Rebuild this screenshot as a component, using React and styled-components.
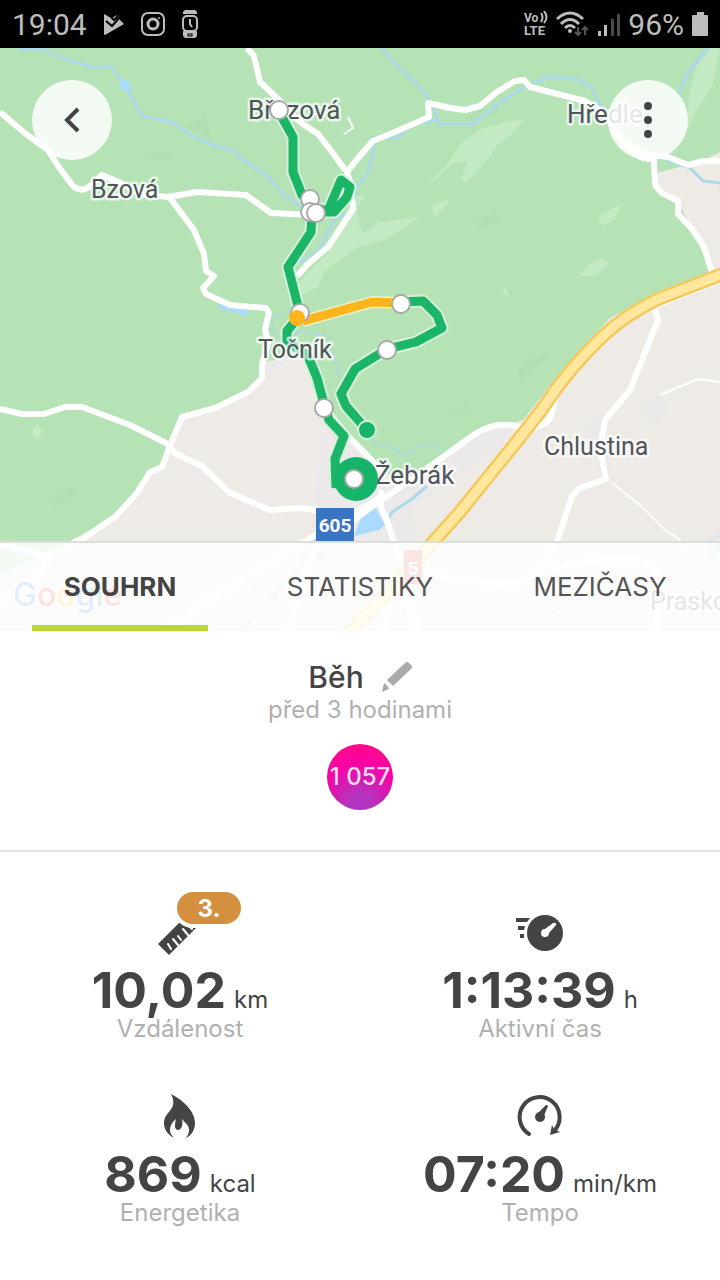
import React, { useState } from "react";
import styled, { createGlobalStyle, css } from "styled-components";

const GlobalStyle = createGlobalStyle`
  * {
    box-sizing: border-box;
  }

  body {
    margin: 0;
    background: #fff;
    color: #444;
    font-family: Inter, "Open Sans", sans-serif;
  }
`;

const StatusBar = styled.header`
  display: flex;
  align-items: center;
  justify-content: space-between;
  height: 48px;
  padding: 0 12px;
  background: #000;
  color: #bdbdbd;
  font-family: Roboto, sans-serif;
  font-size: 30px;
`;

const StatusGroup = styled.div`
  display: flex;
  align-items: center;
  gap: ${props => props.$gap}px;

  svg {
    display: block;
  }
`;

const Hero = styled.section`
  position: relative;
`;

const MapCanvas = styled.svg`
  display: block;
  width: 100%;
  height: auto;
  background: #b5e3b5;
`;

const PlaceName = styled.text`
  font-family: Roboto, sans-serif;
  font-size: ${props => (props.$small ? 25 : 26)}px;
  fill: #50555c;
  stroke: rgba(255, 255, 255, 0.7);
  stroke-width: 5px;
  stroke-linejoin: round;
  paint-order: stroke;
`;

const RoadNumber = styled.text`
  font-family: Roboto, sans-serif;
  font-size: 19px;
  font-weight: 700;
  fill: #fff;
  text-anchor: middle;
`;

const MapLogo = styled.text`
  font-family: Inter, sans-serif;
  font-size: 32px;
  font-weight: 500;
  stroke: #fff;
  stroke-width: 2px;
  paint-order: stroke;
`;

const RoundButton = styled.button`
  position: absolute;
  top: 32px;
  ${props => props.$side}: 32px;
  width: 80px;
  height: 80px;
  padding: 0;
  border: 0;
  border-radius: 50%;
  background: rgba(255, 255, 255, 0.85);
  cursor: pointer;

  svg {
    display: block;
    width: 100%;
    height: 100%;
  }
`;

const Tabs = styled.nav`
  position: absolute;
  right: 0;
  bottom: 0;
  left: 0;
  display: grid;
  grid-template-columns: repeat(3, 1fr);
  height: 90px;
  border-top: 2px solid #dddddb;
  background: rgba(255, 255, 255, 0.85);
  background-clip: padding-box;
`;

const Tab = styled.button`
  display: flex;
  flex-direction: column;
  padding: 4px 32px 0;
  border: 0;
  background: none;
  color: #555;
  font-family: inherit;
  font-size: 26px;
  cursor: pointer;

  span {
    display: flex;
    flex: 1;
    align-items: center;
    justify-content: center;
    align-self: center;
  }

  &::after {
    content: "";
    width: 100%;
    height: 6px;
  }

  ${props =>
    props.$active &&
    css`
      color: #444;
      font-weight: 700;

      &::after {
        background: #bcd535;
      }
    `};
`;

const Summary = styled.section`
  display: flex;
  flex-direction: column;
  align-items: center;
  padding: 28px 0 40px;
  border-bottom: 2px solid #e3e3e3;
`;

const TitleRow = styled.div`
  display: flex;
  align-items: center;
  gap: 18px;
`;

const Title = styled.h1`
  margin: 0;
  font-size: 30px;
  font-weight: 500;
  line-height: 36px;
`;

const EditButton = styled.button`
  padding: 0;
  border: 0;
  background: none;
  cursor: pointer;

  svg {
    display: block;
  }
`;

const Muted = styled.p`
  margin: 0;
  color: #b0b0b0;
  font-size: 24px;
  line-height: 30px;
`;

const Points = styled.div`
  display: flex;
  align-items: center;
  justify-content: center;
  width: 66px;
  height: 66px;
  margin-top: 19px;
  border-radius: 50%;
  background: radial-gradient(
    circle at 50% 92%,
    #ad35c4 0%,
    #b931bd 20%,
    #fb00a5 62%,
    #ff1479 100%
  );
  color: #ffdcf3;
  font-size: 24px;
  font-weight: 500;
  line-height: 30px;
  white-space: nowrap;
`;

const StatsGrid = styled.section`
  display: grid;
  grid-template-columns: 1fr 1fr;
  row-gap: 52px;
  padding: 56px 0;
`;

const StatBox = styled.article`
  display: flex;
  flex-direction: column;
  align-items: center;
`;

const StatIcon = styled.div`
  position: relative;
  width: 48px;
  height: 48px;

  svg {
    display: block;
  }
`;

const RankBadge = styled.span`
  position: absolute;
  top: -16px;
  left: 21px;
  display: flex;
  align-items: center;
  justify-content: center;
  width: 64px;
  height: 32px;
  border-radius: 16px;
  background: #d4903f;
  box-shadow: 0 0 0 4px #fff;
  color: #fff;
  font-size: 24px;
  font-weight: 700;
`;

const Value = styled.div`
  display: flex;
  align-items: baseline;
  gap: 8px;
  margin-top: 6px;
  font-size: 24px;
  line-height: 30px;
  white-space: nowrap;

  strong {
    font-size: 50px;
    line-height: 56px;
  }
`;

const StatLabel = styled(Muted)`
  line-height: 22px;
`;

const whiteRoads = [
  "M0 112 L26 134 L48 150 L58 166 L73 186 Q83 194 92 184 L102 175 L121 183 L140 194 L168 197 L197 192 L246 195 L271 213 L310 215",
  "M170 198 L194 230 L204 254 L206 271 L214 276 L203 288 L206 294 L230 305 L266 308 L269 313 L265 329 L268 343 L262 364 L262 378 L248 392 L215 408 L182 417 L169 448 L162 467 L150 472 L137 493 L116 516 L84 538 L50 554 L35 580 L0 602",
  "M0 409 L22 414 L44 414 L65 407 L82 407 L130 425 L166 443 L176 454 L202 466 L230 493 L270 510 L300 508 L320 511",
  "M247 48 L254 56 L260 82 L278 99 L300 122 L318 134 L332 152 L345 170",
  "M297 276 L308 264 L328 247 L353 209 L351 185 L347 172 L358 158 L373 141 L397 131 L429 117 L428 103 L450 108 L465 110 L480 106 L497 92 L515 81 L524 80 L530 87 L585 101 L603 112 L615 130 L624 143 L640 157 L654 160 L655 185 L662 193 L678 201 L678 214 L693 230 L704 247 L712 272",
  "M625 142 L646 154 L668 157 L688 165 L703 161 L720 161",
  "M326 409 L348 436 L366 454 L381 471",
  "M285 640 L315 549 L370 508 L425 470 L475 434 Q496 420 519 427 Q550 430 552 411 L558 390 L590 349 L630 316 L720 280",
  "M382 490 Q377 505 386 517 L394 542 L402 566",
  "M150 640 L200 606 L270 562 L324 530 L385 495",
  "M655 308 L658 320 L630 390 L605 420 L600 448 L606 479 L580 488 L572 496 L557 542 L540 570 L520 583 L494 584 L424 575",
  "M552 570 Q600 555 640 560 Q663 570 660 596 L655 631",
  "M394 575 L384 630 M397 580 L420 631",
  "M0 544 L46 556"
];

const thinRoads = [
  "M660 395 L698 379 L720 382",
  "M612 483 L640 505 L664 529 L680 540 L686 556",
  "M348 117 L353 128 L344 134"
];

const streams = [
  "M18 49 L43 49 L68 60 L97 68 L111 66 L125 86 L142 116 L171 122 L191 135 L212 145 L235 151 L240 158 L268 177 L284 195 L307 210 L340 218",
  "M382 48 L396 65 L424 91 L431 105 L440 124 L473 124 L495 106 L526 86 L551 76 L580 80 L592 88 L600 105 L618 122",
  "M440 120 L414 124 L397 138 L374 137 L373 154 L366 177 L356 186 L352 214 L335 218 L318 252 L299 262",
  "M708 49 L688 72 L678 95 M662 158 L690 168 L703 181 L720 183",
  "M427 486 L412 499 L392 512 L389 518 M720 544 Q700 560 720 550",
  "M330 530 L312 543 L296 572 L240 632"
];

const motorway =
  "M725 273 L658 299 Q625 315 602 337 C580 358 560 382 545 405 C520 439 490 474 459 513 L400 579 L345 637";

const track =
  "M279 112 L293 137 L293 172 L302 195 L313 207 L328 211 L341 180 L350 187 L347 197 L334 212 L322 212 M312 214 L311 232 L288 267 L299 310 L297 319 L287 331 L287 341 L308 356 L317 378 L323 400 L329 420 L344 436 L335 459 L336 488 M401 302 L423 301 L437 315 L442 328 L416 342 L387 349 L355 369 L341 394 L346 406 L366 429";

const fastTrack = "M303 321 L372 302 L401 303";

const splits = [
  [279, 110],
  [310, 199],
  [310, 212],
  [316, 213],
  [300, 313],
  [401, 304],
  [387, 350],
  [324, 408]
];

const RouteMap = () => (
  <MapCanvas viewBox="0 48 720 583" role="img" aria-label="Mapa trasy">
    <g fill="#eeebe6">
      <path d="M68 542 L116 516 L137 493 L150 472 L162 467 L182 417 L215 408 L248 392 L262 378 L264 362 L296 355 L309 362 L326 409 L348 436 L381 472 L408 481 L475 434 L523 420 L562 370 L610 318 L655 294 L720 269 V631 H0 V575 Z" />
      <path d="M660 172 L700 162 L720 152 V275 L712 275 L693 230 L678 203 L658 190 L655 175 Z" />
    </g>
    <path
      d="M320 435 L340 434 L363 461 L392 480 L423 475 L480 430 L515 425 L497 451 L438 488 L411 507 L417 542 L350 542 L315 508 Z M584 423 L603 412 L612 473 L617 482 L603 484 L590 448 Z M640 403 L660 394 L669 409 L657 424 L644 419 Z M264 363 L290 358 L275 371 L264 376 Z"
      fill="#ece9ea"
    />
    <g fill="#c4eac3">
      <path d="M410 201 L445 167 L462 142 L482 129 L510 121 L524 120 L516 130 L497 146 L480 169 L466 183 L460 179 L469 161 L454 163 Z M432 205 L451 199 L438 215 L434 217 Z M598 216 L622 204 L614 220 L605 225 L599 222 Z M578 275 L588 265 L602 258 L611 264 L593 277 Z M690 90 L696 68 L708 48 L720 48 L713 85 L696 111 L685 135 Z" />
      <path d="M353 196 L365 196 L357 206 L359 226 L363 233 L379 222 L420 217 L408 226 L384 240 L357 248 L325 271 L317 288 L297 298 L296 285 L330 250 Z M502 294 L505 287 L510 296 Z M30 432 L37 424 L43 431 L37 440 Z M250 590 L256 584 L270 590 Z" />
    </g>
    <g fill="#b1dfb1">
      <path d="M460 117 L499 105 L500 111 L476 121 Z M472 220 L497 213 L500 224 L482 228 Z M519 370 L526 362 L550 351 L545 360 L521 379 Z M445 417 L468 404 L467 410 Z M50 503 L72 486 L76 491 L56 506 Z M145 153 L170 151 L174 158 L155 160 Z M183 127 L206 117 L209 136 Z" />
    </g>
    <g fill="none" stroke="#abd9ea" strokeWidth="3" strokeLinejoin="round">
      {streams.map(d => (
        <path key={d} d={d} />
      ))}
      <g strokeWidth="2" strokeDasharray="5 2">
        <path d="M298 311 Q273 313 272 325 Q270 338 285 336 L301 331 L325 335 L342 380" />
        <path d="M369 438 L378 446 L395 448 L403 456 L422 444 L434 444 L441 454" />
      </g>
    </g>
    <path
      d="M217 308 L220 304 L248 310 L247 316 Z M365 507 L374 505 L385 525 L379 530 L354 536 Z M120 83 L127 79 L132 87 L128 92 L120 89 Z M310 559 L320 549 L325 557 L315 561 Z"
      fill="#aadaff"
    />
    <g fill="none" stroke="#fff" strokeWidth="6" strokeLinejoin="round">
      {whiteRoads.map(d => (
        <path key={d} d={d} />
      ))}
      <g strokeWidth="2">
        {thinRoads.map(d => (
          <path key={d} d={d} />
        ))}
      </g>
    </g>
    <g fill="none" strokeLinejoin="round">
      <path d={motorway} stroke="#f4c95c" strokeWidth="14" />
      <path d={motorway} stroke="#ffe79d" strokeWidth="9" />
    </g>
    <path
      d="M535 631 C555 600 590 595 620 600 M660 570 L720 535 M680 628 L702 602"
      fill="none"
      stroke="#dde4ed"
      strokeWidth="3"
    />

    <PlaceName x="248" y="119">Březová</PlaceName>
    <PlaceName x="567" y="123">Hředle</PlaceName>
    <PlaceName $small x="91" y="198">Bzová</PlaceName>
    <PlaceName $small x="544" y="455">Chlustina</PlaceName>
    <PlaceName $small x="650" y="610">Praskolesy</PlaceName>

    <g fill="none" strokeLinejoin="round">
      <path d={track} stroke="#d5f2db" strokeWidth="13" />
      <path d={fastTrack} stroke="#e9f3c8" strokeWidth="12" />
      <path d={track} stroke="#1bb568" strokeWidth="9" />
      <path d={fastTrack} stroke="#ffb41d" strokeWidth="9" />
    </g>
    <PlaceName $small x="258" y="358">Točník</PlaceName>
    <PlaceName x="375" y="484">Žebrák</PlaceName>
    <circle cx="367" cy="430" r="9" fill="#15b469" stroke="#d5f2db" strokeWidth="2" />
    <circle cx="356" cy="479" r="22" fill="#15b469" />
    <g fill="#fff" stroke="#a8a8a8" strokeWidth="2">
      {splits.map(([x, y]) => (
        <circle key={`${x}-${y}`} cx={x} cy={y} r="9" />
      ))}
      <circle cx="354" cy="479" r="9" />
    </g>
    <circle cx="297" cy="318" r="8" fill="#ffb41d" />

    <rect x="316" y="508" width="38" height="33" fill="#3a75c4" />
    <RoadNumber x="335" y="532">605</RoadNumber>
    <rect x="404" y="550" width="18" height="34" fill="#d9534f" />
    <RoadNumber x="413" y="575">5</RoadNumber>

    <MapLogo x="13" y="606">
      <tspan fill="#4285f4">G</tspan>
      <tspan fill="#ea4335">o</tspan>
      <tspan fill="#fbbc05">o</tspan>
      <tspan fill="#4285f4">g</tspan>
      <tspan fill="#34a853">l</tspan>
      <tspan fill="#ea4335">e</tspan>
    </MapLogo>
  </MapCanvas>
);

const PlayCheckIcon = () => (
  <svg width="22" height="24" viewBox="0 0 22 24">
    <path d="M1 2 L8 6 L17 2 L17 8 L21 12 L2 23 Q1 23 1 22 Z" fill="#bdbdbd" />
    <path d="M3 9 L9 14 L18 4" fill="none" stroke="#000" strokeWidth="2" />
    <path d="M8 5 L11 8 L18 1" fill="none" stroke="#000" strokeWidth="2" />
  </svg>
);

const CameraIcon = () => (
  <svg width="24" height="24" viewBox="0 0 24 24" fill="none" stroke="#bdbdbd" strokeWidth="2">
    <rect x="1" y="1" width="22" height="22" rx="6" />
    <circle cx="12" cy="12" r="5" strokeWidth="3" />
    <circle cx="18" cy="6" r="1" fill="#bdbdbd" stroke="none" />
  </svg>
);

const WatchIcon = () => (
  <svg width="18" height="28" viewBox="0 0 18 28" fill="none" stroke="#bdbdbd" strokeWidth="2">
    <path d="M2 4 V2 L4 0 H14 L16 2 V4 Z M2 21 H16 V26 L14 28 H4 L2 26 Z" fill="#bdbdbd" stroke="none" />
    <rect x="2" y="6" width="14" height="15" rx="4" fill="#000" />
    <path d="M9 9 V14 L11 17" />
    <rect x="7" y="24" width="4" height="2" stroke="#000" strokeWidth="1" />
  </svg>
);

const VolteIcon = () => (
  <svg width="24" height="26" viewBox="0 0 24 26" fill="#bdbdbd" fontFamily="Roboto, sans-serif" fontWeight="700">
    <text x="0" y="11" fontSize="12">Vo</text>
    <path d="M17 2 Q20 6 17 11 M20 0 Q25 6 20 12" fill="none" stroke="#bdbdbd" strokeWidth="2" />
    <text x="0" y="24" fontSize="13">LTE</text>
  </svg>
);

const WifiIcon = () => (
  <svg width="34" height="26" viewBox="0 0 34 26" fill="none" stroke="#bdbdbd" strokeWidth="3">
    <path d="M1 8 Q14 -4 27 8 M5 13 Q14 4 23 13 M9 17 Q14 12 19 17" />
    <circle cx="14" cy="20" r="2" fill="#bdbdbd" stroke="none" />
    <path d="M22 16 V24 M19 21 L22 24 L25 21 M29 24 V16 M26 19 L29 16 L32 19" stroke="#555" strokeWidth="2" />
  </svg>
);

const SignalIcon = () => (
  <svg width="22" height="24" viewBox="0 0 22 24">
    <path d="M0 19 H3 V24 H0 Z M6 13 H9 V24 H6 Z" fill="#bdbdbd" />
    <path d="M13 7 H16 V24 H13 Z M19 2 H22 V24 H19 Z" fill="#4a4a4a" />
  </svg>
);

const BatteryIcon = () => (
  <svg width="16" height="24" viewBox="0 0 16 24" fill="#bdbdbd">
    <path d="M5 0 H12 V3 H15 Q16 3 16 4 V23 Q16 24 15 24 H1 Q0 24 0 23 V4 Q0 3 1 3 H5 Z" />
  </svg>
);

const PencilIcon = () => (
  <svg width="30" height="30" viewBox="0 0 30 30" fill="#aaa">
    <path d="M23 1 Q25 -1 27 1 L29 3 Q31 5 29 7 L11 24 L5 18 Z M2 21 Q6 23 7 27 L0 30 Z" />
  </svg>
);

const RulerIcon = () => (
  <svg width="48" height="48" viewBox="0 0 48 48">
    <path d="M2 36 L35 3 L46 14 L13 47 Z" fill="#444" />
    <path
      d="M12 36 L15 41 M17 31 L22 37 M22 28 L25 32 M27 21 L32 27 M31 16 L36 21"
      stroke="#fff"
      strokeWidth="2"
      strokeLinecap="round"
    />
  </svg>
);

const StopwatchIcon = () => (
  <svg width="48" height="48" viewBox="0 0 48 48" fill="#444">
    <path d="M0 10 H14 L11 14 H0 Z M2 18 H9 L8 22 H2 Z M4 26 H8 V30 H4 Z" />
    <circle cx="29" cy="25" r="18" />
    <path d="M29 21 L37 15 Q41 14 40 17 L33 25 A4 4 0 1 1 29 21 Z" fill="#fff" />
  </svg>
);

const FlameIcon = () => (
  <svg width="48" height="48" viewBox="0 0 48 48" fill="#444">
    <path d="M15 2 C25 7 39 18 39 31 C39 38 35 44 30 46 C33 42 34 38 32 34 C30 30 26 29 25 24 C28 31 26 38 22 38 C19 38 18 34 20 27 C16 30 14 34 14 38 C14 41 16 44 18 46 C11 42 8 37 8 31 C8 19 23 18 15 2 Z" />
  </svg>
);

const PaceIcon = () => (
  <svg width="48" height="48" viewBox="0 0 48 48" fill="#444">
    <path d="M13 42 A20 20 0 1 1 38 39" fill="none" stroke="#444" strokeWidth="4" strokeLinecap="round" />
    <path d="M36 33 L38 37 L44 40 L34 43 Z" />
    <circle cx="24" cy="25" r="5" />
    <path d="M21 22 L29 14 Q30 12 32 14 L27 26 Z" />
  </svg>
);

const tabs = ["SOUHRN", "STATISTIKY", "MEZIČASY"];

const stats = [
  { label: "Vzdálenost", value: "10,02", unit: "km", Icon: RulerIcon, rank: "3." },
  { label: "Aktivní čas", value: "1:13:39", unit: "h", Icon: StopwatchIcon },
  { label: "Energetika", value: "869", unit: "kcal", Icon: FlameIcon },
  { label: "Tempo", value: "07:20", unit: "min/km", Icon: PaceIcon }
];

const Stat = ({ label, value, unit, Icon, rank }) => (
  <StatBox>
    <StatIcon>
      <Icon />
      {rank && <RankBadge>{rank}</RankBadge>}
    </StatIcon>
    <Value>
      <strong>{value}</strong>
      <span>{unit}</span>
    </Value>
    <StatLabel>{label}</StatLabel>
  </StatBox>
);

const App = () => {
  const [active, setActive] = useState("SOUHRN");

  return (
    <>
      <GlobalStyle />
      <StatusBar>
        <StatusGroup $gap={16}>
          <span>19:04</span>
          <PlayCheckIcon />
          <CameraIcon />
          <WatchIcon />
        </StatusGroup>
        <StatusGroup $gap={8}>
          <VolteIcon />
          <WifiIcon />
          <SignalIcon />
          <span>96%</span>
          <BatteryIcon />
        </StatusGroup>
      </StatusBar>
      <main>
        <Hero>
          <RouteMap />
          <RoundButton type="button" $side="left" aria-label="Zpět">
            <svg viewBox="0 0 80 80" fill="none" stroke="#444" strokeWidth="4">
              <path d="M46 29 L35 40 L46 51" />
            </svg>
          </RoundButton>
          <RoundButton type="button" $side="right" aria-label="Další možnosti">
            <svg viewBox="0 0 80 80" fill="#444">
              <circle cx="40" cy="26" r="4" />
              <circle cx="40" cy="40" r="4" />
              <circle cx="40" cy="54" r="4" />
            </svg>
          </RoundButton>
          <Tabs>
            {tabs.map(tab => (
              <Tab
                key={tab}
                type="button"
                $active={tab === active}
                aria-pressed={tab === active}
                onClick={() => setActive(tab)}
              >
                <span>{tab}</span>
              </Tab>
            ))}
          </Tabs>
        </Hero>
        <Summary>
          <TitleRow>
            <Title>Běh</Title>
            <EditButton type="button" aria-label="Upravit">
              <PencilIcon />
            </EditButton>
          </TitleRow>
          <Muted>před 3 hodinami</Muted>
          <Points>1 057</Points>
        </Summary>
        <StatsGrid>
          {stats.map(stat => (
            <Stat key={stat.label} {...stat} />
          ))}
        </StatsGrid>
      </main>
    </>
  );
};

export default App;
